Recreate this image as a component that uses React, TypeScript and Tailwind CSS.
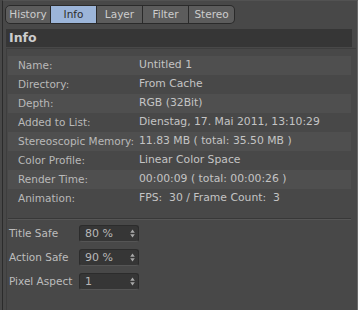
import React from "react";

const rows: [string, string][] = [
  ["Name:", "Untitled 1"],
  ["Directory:", "From Cache"],
  ["Depth:", "RGB (32Bit)"],
  ["Added to List:", "Dienstag, 17. Mai 2011, 13:10:29"],
  ["Stereoscopic Memory:", "11.83 MB ( total: 35.50 MB )"],
  ["Color Profile:", "Linear Color Space"],
  ["Render Time:", "00:00:09 ( total: 00:00:26 )"],
  ["Animation:", "FPS:  30 / Frame Count:  3"],
];

const tabs = ["History", "Info", "Layer", "Filter", "Stereo"];

function Spinner({ value }: { value: string }) {
  return (
    <div className="w-[60px] h-[17px] rounded-[3px] bg-[#363636] border border-[#2c2c2c] border-b-[#555] flex items-center justify-between pl-[5px] pr-[3px]">
      <span className="text-[11px] text-[#b8b8b8] leading-none">{value}</span>
      <svg width="5" height="9" viewBox="0 0 5 9">
        <path d="M2.5 0.5 L4.8 3.8 L0.2 3.8 Z" fill="#a8a8a8" />
        <path d="M2.5 8.5 L4.8 5.2 L0.2 5.2 Z" fill="#a8a8a8" />
      </svg>
    </div>
  );
}

export default function App() {
  return (
    <div
      className="w-[358px] h-[310px] bg-[#2f2f2f] flex"
      style={{ fontFamily: '"DejaVu Sans", Verdana, sans-serif' }}
    >
      <div className="w-[2px] bg-[#484848]" />
      <div className="flex-1 bg-[#484848] border-l border-[#2b2b2b] border-r border-r-[#6a6a6a] border-t border-t-[#525252] flex flex-col">
        <div className="flex mt-[4px] ml-[2px] h-[19px]">
          {tabs.map((t, i) => (
            <div
              key={t}
              className={
                "w-[46px] h-[19px] flex items-center justify-center text-[10.5px] border-y border-[#2a2a2a] " +
                (i === 0 ? "rounded-l-[5px] border-l " : "") +
                (i === tabs.length - 1 ? "rounded-r-[5px] border-r " : "border-r ") +
                (i === 1
                  ? "bg-[#9cb5d9] text-[#2d2d2d]"
                  : "bg-[#5c5c5c] text-[#cdcdcd]")
              }
            >
              {t}
            </div>
          ))}
        </div>
        <div className="ml-[3px] mr-[5px] mt-[5px] h-[18px] bg-[#363636] flex items-center pl-[3px] text-[12.5px] font-bold text-[#cccccc]">
          Info
        </div>
        <div className="flex-1 ml-[3px] mr-[1px] mt-[1px] border-l border-[#3e3e3e] border-t border-t-[#3e3e3e] pt-[7px] pl-[1px] pr-[5px]">
          <div className="flex flex-col">
            {rows.map(([k, v], i) => (
              <div
                key={k}
                className={
                  "h-[19px] flex items-center " +
                  (i % 2 === 0 ? "bg-[#4f4f4f]" : "")
                }
              >
                <span className="w-[131px] shrink-0 pl-[10px] text-[10.5px] text-[#b9b9b9] whitespace-nowrap">{k}</span>
                <span className="text-[10.8px] text-[#c4c4c4] whitespace-pre">{v}</span>
              </div>
            ))}
          </div>
          <div className="mt-[10px] h-[2px] border-t border-[#383838] border-b border-b-[#565656]" />
          <div className="flex flex-col gap-[7px] mt-[5px]">
            {[
              ["Title Safe", "80 %"],
              ["Action Safe", "90 %"],
              ["Pixel Aspect", "1"],
            ].map(([l, v]) => (
              <div key={l} className="flex items-center h-[17px]">
                <span className="w-[71px] pl-[1px] text-[10.5px] text-[#bdbdbd] whitespace-nowrap">{l}</span>
                <Spinner value={v} />
              </div>
            ))}
          </div>
        </div>
      </div>
    </div>
  );
}
